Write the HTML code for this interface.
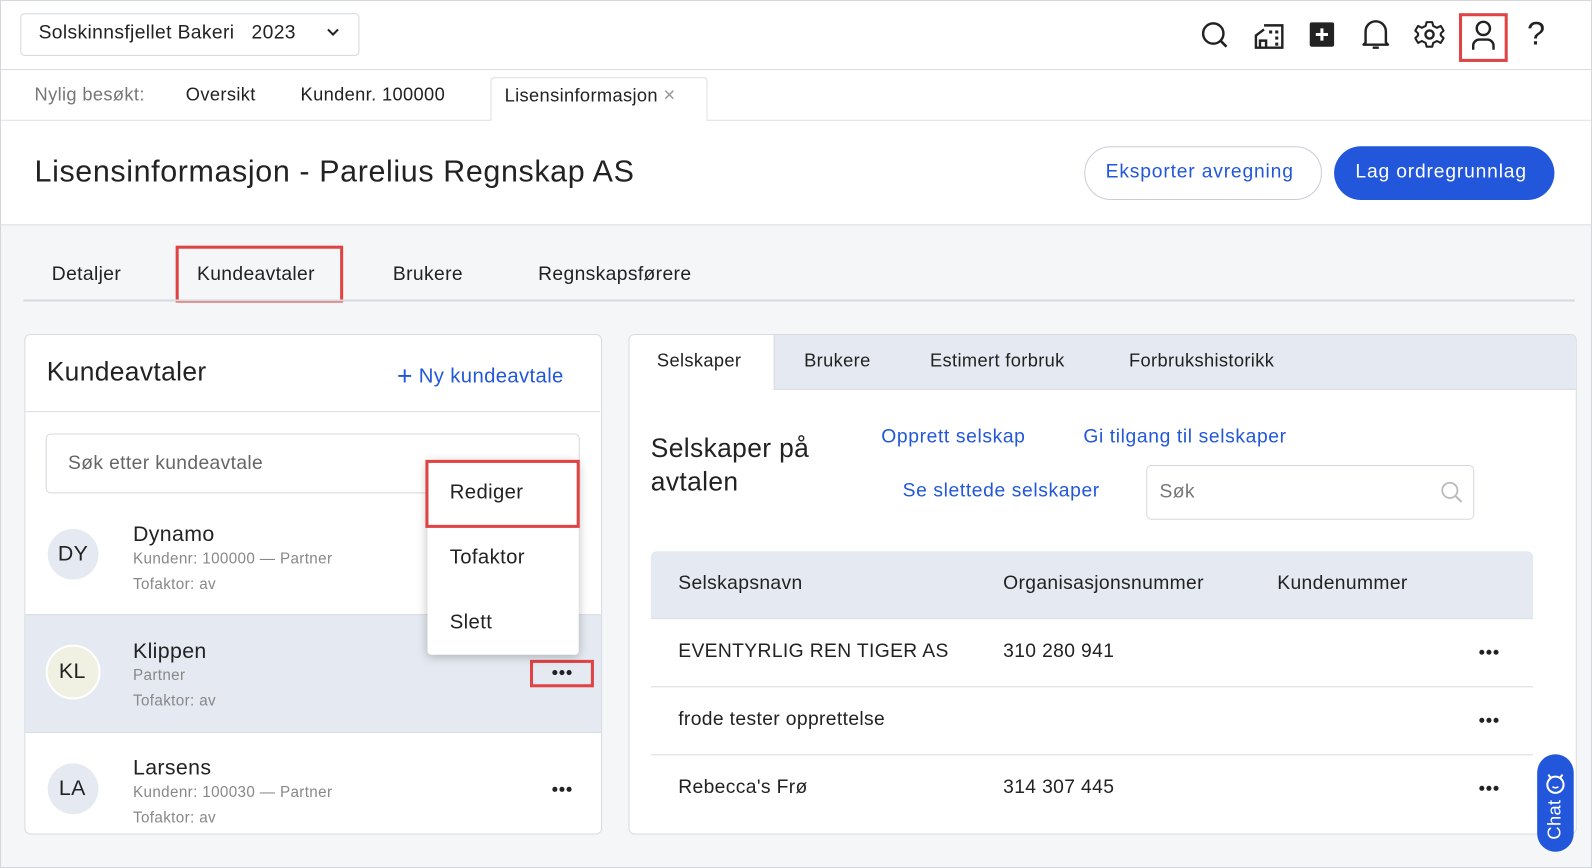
<!DOCTYPE html>
<html><head><meta charset="utf-8"><style>
html,body{margin:0;padding:0;width:1592px;height:868px;overflow:hidden;background:#fff}
#w{position:absolute;left:0;top:0;width:1568px;height:855px;transform:scale(1.0153,1.0152);transform-origin:0 0;font-family:"Liberation Sans",sans-serif;color:#222;background:#f4f6f8;border:1px solid #d4d8dd;box-sizing:border-box;letter-spacing:.35px}
.a{position:absolute}
.t{position:absolute;white-space:nowrap}
.blue{color:#2257db}
.red{position:absolute;border:3px solid #e04343;box-sizing:border-box}
.dd{position:absolute;display:flex;gap:2px;height:5px}
.dd i{display:block;width:5px;height:5px;border-radius:50%;background:#222}
</style></head><body><div id="w">
<div class="a" style="left:0;top:0;width:1566px;height:67px;background:#fff;border-bottom:1px solid #d8dce1"></div>
<div class="a" style="left:19px;top:12px;width:332px;height:40px;border:1px solid #d4d8de;border-radius:4px;background:#fff"></div>
<div class="t" style="left:37px;top:21px;font-size:19px">Solskinnsfjellet Bakeri&nbsp;&nbsp;&nbsp;2023</div>
<svg class="a" style="left:320px;top:26px" width="14" height="10" viewBox="0 0 14 10"><path d="M2 2l5 5 5-5" stroke="#222" stroke-width="2" fill="none"/></svg>
<svg class="a" style="left:1180px;top:18px" width="32" height="32" viewBox="0 0 32 32"><circle cx="14" cy="14" r="10" stroke="#222" stroke-width="2.4" fill="none"/><path d="M21 21l6 6" stroke="#222" stroke-width="2.6"/></svg>
<svg class="a" style="left:1234px;top:20px" width="30" height="28" viewBox="0 0 30 28"><path d="M10 4h18v22H2V14l8-6" stroke="#222" stroke-width="2.4" fill="none"/><path d="M6 26v-7h6v7" stroke="#222" stroke-width="2.4" fill="none"/><rect x="15" y="9" width="3" height="3" fill="#222"/><rect x="21" y="9" width="3" height="3" fill="#222"/><rect x="21" y="15" width="3" height="3" fill="#222"/><rect x="21" y="21" width="3" height="3" fill="#222"/></svg>
<div class="a" style="left:1289px;top:21px;width:24px;height:24px;background:#222;border-radius:2px"></div>
<svg class="a" style="left:1289px;top:21px" width="24" height="24"><path d="M12 6v12M6 12h12" stroke="#fff" stroke-width="3"/></svg>
<svg class="a" style="left:1338px;top:16px" width="32" height="34" viewBox="0 0 32 34"><path d="M6 25V14a10 10 0 0 1 20 0v11l2 2H4z" stroke="#222" stroke-width="2.4" fill="none" stroke-linejoin="round"/><path d="M13 30h6" stroke="#222" stroke-width="2.4"/></svg>
<svg class="a" style="left:1392px;top:18px" width="30" height="30" viewBox="0 0 30 30"><path d="M12 2h6l1 4 4 2 4-2 3 5-3 3v2l3 3-3 5-4-2-4 2-1 4h-6l-1-4-4-2-4 2-3-5 3-3v-2l-3-3 3-5 4 2 4-2z" stroke="#222" stroke-width="2.2" fill="none" stroke-linejoin="round" transform="scale(.93) translate(1,1)"/><circle cx="15" cy="15" r="4" stroke="#222" stroke-width="2.4" fill="none"/></svg>
<div class="red" style="left:1436px;top:12px;width:48px;height:48px"></div>
<svg class="a" style="left:1446px;top:18px" width="28" height="32" viewBox="0 0 28 32"><circle cx="14" cy="9" r="6.5" stroke="#222" stroke-width="2.4" fill="none"/><path d="M4 30v-4a6 6 0 0 1 6-6h8a6 6 0 0 1 6 6v4" stroke="#222" stroke-width="2.4" fill="none"/></svg>
<div class="t" style="left:1503px;top:14px;font-size:32px;color:#222">?</div>
<div class="a" style="left:0;top:68px;width:1566px;height:49px;background:#fff;border-bottom:1px solid #d8dce1"></div>
<div class="t" style="left:33px;top:82px;font-size:18px;color:#777">Nylig besøkt:</div>
<div class="t" style="left:182px;top:82px;font-size:18px">Oversikt</div>
<div class="t" style="left:295px;top:82px;font-size:18px">Kundenr. 100000</div>
<div class="a" style="left:482px;top:75px;width:212px;height:43px;background:#fff;border:1px solid #d8dce1;border-bottom:none;border-radius:4px 4px 0 0"></div>
<div class="t" style="left:496px;top:82px;font-size:18px">Lisensinformasjon <span style="color:#999;font-size:20px">×</span></div>
<div class="a" style="left:0;top:118px;width:1566px;height:102px;background:#fff;border-bottom:1px solid #d8dce1"></div>
<div class="t" style="left:33px;top:152px;font-size:30px;color:#222;letter-spacing:.6px">Lisensinformasjon - Parelius Regnskap AS</div>
<div class="a" style="left:1067px;top:143px;width:232px;height:51px;border:1px solid #c9ced6;border-radius:26px;background:#fff"></div>
<div class="t blue" style="left:1088px;top:158px;font-size:19px;letter-spacing:.8px">Eksporter avregning</div>
<div class="a" style="left:1313px;top:143px;width:217px;height:53px;border-radius:27px;background:#2257db"></div>
<div class="t" style="left:1334px;top:158px;font-size:19px;color:#fff;letter-spacing:.8px">Lag ordregrunnlag</div>
<div class="t" style="left:50px;top:259px;font-size:19px">Detaljer</div>
<div class="t" style="left:193px;top:259px;font-size:19px">Kundeavtaler</div>
<div class="red" style="left:172px;top:241px;width:165px;height:56px"></div>
<div class="t" style="left:386px;top:259px;font-size:19px">Brukere</div>
<div class="t" style="left:529px;top:259px;font-size:19px">Regnskapsførere</div>
<div class="a" style="left:22px;top:294px;width:1528px;height:2px;background:#d6dbe1"></div>
<div class="a" style="left:23px;top:328px;width:567px;height:491px;background:#fff;border:1px solid #d8dce1;border-radius:6px;overflow:hidden">
 <div class="a" style="left:0;top:275px;width:567px;height:115px;background:#e5eaf2;border-top:1px solid #d8dce1;border-bottom:1px solid #d8dce1"></div>
</div>
<div class="t" style="left:45px;top:350px;font-size:26px">Kundeavtaler</div>
<div class="t blue" style="left:390px;top:354px;font-size:20px"><span style="font-size:26px;vertical-align:-2px">+</span>&nbsp;Ny kundeavtale</div>
<div class="a" style="left:24px;top:404px;width:566px;height:1px;background:#d8dce1"></div>
<div class="a" style="left:44px;top:426px;width:524px;height:57px;border:1px solid #d4d8de;border-radius:5px;background:#fff"></div>
<div class="t" style="left:66px;top:445px;font-size:19px;color:#666">Søk etter kundeavtale</div>
<div class="a" style="left:46px;top:520px;width:50px;height:50px;border-radius:50%;background:#e5eaf2"></div>
<div class="t" style="left:56px;top:533px;font-size:21px">DY</div>
<div class="t" style="left:130px;top:514px;font-size:21px">Dynamo</div>
<div class="t" style="left:130px;top:541px;font-size:15px;color:#888">Kundenr: 100000 — Partner</div>
<div class="t" style="left:130px;top:566px;font-size:15px;color:#888">Tofaktor: av</div>
<div class="a" style="left:44px;top:634px;width:50px;height:50px;border-radius:50%;background:#f0f1e3;border:2px solid #fff"></div>
<div class="t" style="left:57px;top:649px;font-size:21px">KL</div>
<div class="t" style="left:130px;top:629px;font-size:21px">Klippen</div>
<div class="t" style="left:130px;top:656px;font-size:15px;color:#888">Partner</div>
<div class="t" style="left:130px;top:681px;font-size:15px;color:#888">Tofaktor: av</div>
<div class="red" style="left:521px;top:649px;width:63px;height:27px"></div>
<div class="dd" style="left:543px;top:659px"><i></i><i></i><i></i></div>
<div class="a" style="left:46px;top:751px;width:50px;height:50px;border-radius:50%;background:#e5eaf2"></div>
<div class="t" style="left:57px;top:764px;font-size:21px">LA</div>
<div class="t" style="left:130px;top:744px;font-size:21px">Larsens</div>
<div class="t" style="left:130px;top:771px;font-size:15px;color:#888">Kundenr: 100030 — Partner</div>
<div class="t" style="left:130px;top:796px;font-size:15px;color:#888">Tofaktor: av</div>
<div class="dd" style="left:543px;top:774px"><i></i><i></i><i></i></div>
<div class="a" style="left:420px;top:453px;width:149px;height:191px;background:#fff;border-radius:4px;box-shadow:0 2px 10px rgba(0,0,0,.25)"></div>
<div class="red" style="left:418px;top:452px;width:152px;height:67px"></div>
<div class="t" style="left:442px;top:473px;font-size:20px">Rediger</div>
<div class="t" style="left:442px;top:537px;font-size:20px">Tofaktor</div>
<div class="t" style="left:442px;top:601px;font-size:20px">Slett</div>
<div class="a" style="left:618px;top:328px;width:932px;height:491px;background:#fff;border:1px solid #d8dce1;border-radius:6px;overflow:hidden">
 <div class="a" style="left:142px;top:0;width:790px;height:53px;background:#e5eaf2;border-bottom:1px solid #d8dce1;border-left:1px solid #d8dce1"></div>
</div>
<div class="t" style="left:646px;top:344px;font-size:18px">Selskaper</div>
<div class="t" style="left:791px;top:344px;font-size:18px">Brukere</div>
<div class="t" style="left:915px;top:344px;font-size:18px">Estimert forbruk</div>
<div class="t" style="left:1111px;top:344px;font-size:18px">Forbrukshistorikk</div>
<div class="t" style="left:640px;top:424px;font-size:26px;line-height:33px">Selskaper på<br>avtalen</div>
<div class="t blue" style="left:867px;top:419px;font-size:19px;letter-spacing:.6px">Opprett selskap</div>
<div class="t blue" style="left:1066px;top:419px;font-size:19px;letter-spacing:.6px">Gi tilgang til selskaper</div>
<div class="t blue" style="left:888px;top:472px;font-size:19px;letter-spacing:.6px">Se slettede selskaper</div>
<div class="a" style="left:1128px;top:457px;width:321px;height:52px;border:1px solid #d4d8de;border-radius:5px;background:#fff"></div>
<div class="t" style="left:1141px;top:473px;font-size:19px;color:#777">Søk</div>
<svg class="a" style="left:1417px;top:472px" width="24" height="24" viewBox="0 0 24 24"><circle cx="10" cy="10" r="7.5" stroke="#bbb" stroke-width="1.8" fill="none"/><path d="M15.5 15.5l6 6" stroke="#bbb" stroke-width="2"/></svg>
<div class="a" style="left:640px;top:542px;width:869px;height:66px;background:#e5eaf2;border-radius:6px 6px 0 0;border-bottom:1px solid #d8dce1"></div>
<div class="t" style="left:667px;top:563px;font-size:19px">Selskapsnavn</div>
<div class="t" style="left:987px;top:563px;font-size:19px">Organisasjonsnummer</div>
<div class="t" style="left:1257px;top:563px;font-size:19px">Kundenummer</div>
<div class="t" style="left:667px;top:630px;font-size:19px">EVENTYRLIG REN TIGER AS</div>
<div class="t" style="left:987px;top:630px;font-size:19px">310 280 941</div>
<div class="dd" style="left:1456px;top:639px"><i></i><i></i><i></i></div>
<div class="a" style="left:640px;top:675px;width:869px;height:1px;background:#d8dce1"></div>
<div class="t" style="left:667px;top:697px;font-size:19px">frode tester opprettelse</div>
<div class="dd" style="left:1456px;top:706px"><i></i><i></i><i></i></div>
<div class="a" style="left:640px;top:742px;width:869px;height:1px;background:#d8dce1"></div>
<div class="t" style="left:667px;top:764px;font-size:19px">Rebecca's Frø</div>
<div class="t" style="left:987px;top:764px;font-size:19px">314 307 445</div>
<div class="dd" style="left:1456px;top:773px"><i></i><i></i><i></i></div>
<div class="a" style="left:1513px;top:742px;width:36px;height:96px;background:#2257db;border-radius:18px"></div>
<div class="t" style="left:1520px;top:826px;font-size:18px;color:#fff;transform:rotate(-90deg);transform-origin:0 0">Chat</div>
<svg class="a" style="left:1520px;top:758px" width="22" height="24" viewBox="0 0 22 24"><circle cx="11" cy="14" r="8" stroke="#fff" stroke-width="2" fill="none"/><path d="M4 4l3 4M18 4l-3 4" stroke="#fff" stroke-width="2"/><path d="M8 16q3 2 6 0" stroke="#fff" stroke-width="1.5" fill="none"/></svg>
</div></body></html>
